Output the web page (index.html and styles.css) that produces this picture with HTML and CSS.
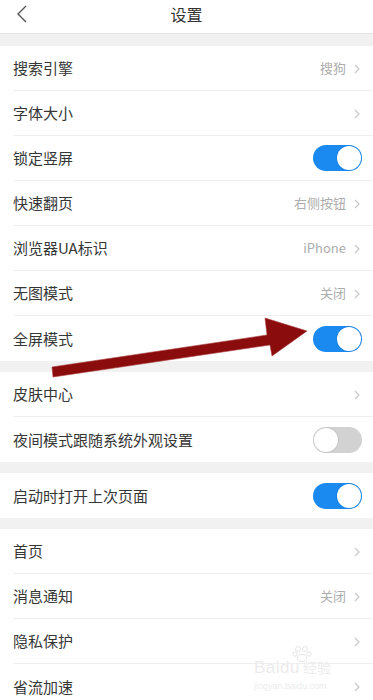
FILE: index.html
```html
<!DOCTYPE html>
<html lang="zh">
<head>
<meta charset="utf-8">
<title>设置</title>
<link rel="stylesheet" href="styles.css">
</head>
<body>
<div class="page">
  <header class="topbar">
    <svg class="back" width="14" height="18" viewBox="0 0 14 18"><polyline points="11,1 3,9 11,17" fill="none" stroke="#555" stroke-width="1.4"/></svg>
    <div class="title">设置</div>
  </header>

  <section class="group">
    <div class="row"><span class="label">搜索引擎</span><span class="right"><span class="value">搜狗</span><svg class="chev" width="6" height="10" viewBox="0 0 6 10"><polyline points="1,1 5,5 1,9" fill="none" stroke="#c8c8c8" stroke-width="1.2"/></svg></span></div>
    <div class="row"><span class="label">字体大小</span><span class="right"><svg class="chev" width="6" height="10" viewBox="0 0 6 10"><polyline points="1,1 5,5 1,9" fill="none" stroke="#c8c8c8" stroke-width="1.2"/></svg></span></div>
    <div class="row"><span class="label">锁定竖屏</span><span class="switch on"><span class="knob"></span></span></div>
    <div class="row"><span class="label">快速翻页</span><span class="right"><span class="value">右侧按钮</span><svg class="chev" width="6" height="10" viewBox="0 0 6 10"><polyline points="1,1 5,5 1,9" fill="none" stroke="#c8c8c8" stroke-width="1.2"/></svg></span></div>
    <div class="row"><span class="label">浏览器UA标识</span><span class="right"><span class="value">iPhone</span><svg class="chev" width="6" height="10" viewBox="0 0 6 10"><polyline points="1,1 5,5 1,9" fill="none" stroke="#c8c8c8" stroke-width="1.2"/></svg></span></div>
    <div class="row"><span class="label">无图模式</span><span class="right"><span class="value">关闭</span><svg class="chev" width="6" height="10" viewBox="0 0 6 10"><polyline points="1,1 5,5 1,9" fill="none" stroke="#c8c8c8" stroke-width="1.2"/></svg></span></div>
    <div class="row"><span class="label">全屏模式</span><span class="switch on"><span class="knob"></span></span></div>
  </section>

  <section class="group">
    <div class="row"><span class="label">皮肤中心</span><span class="right"><svg class="chev" width="6" height="10" viewBox="0 0 6 10"><polyline points="1,1 5,5 1,9" fill="none" stroke="#c8c8c8" stroke-width="1.2"/></svg></span></div>
    <div class="row"><span class="label">夜间模式跟随系统外观设置</span><span class="switch off"><span class="knob"></span></span></div>
  </section>

  <section class="group">
    <div class="row"><span class="label">启动时打开上次页面</span><span class="switch on"><span class="knob"></span></span></div>
  </section>

  <section class="group">
    <div class="row"><span class="label">首页</span><span class="right"><svg class="chev" width="6" height="10" viewBox="0 0 6 10"><polyline points="1,1 5,5 1,9" fill="none" stroke="#c8c8c8" stroke-width="1.2"/></svg></span></div>
    <div class="row"><span class="label">消息通知</span><span class="right"><span class="value">关闭</span><svg class="chev" width="6" height="10" viewBox="0 0 6 10"><polyline points="1,1 5,5 1,9" fill="none" stroke="#c8c8c8" stroke-width="1.2"/></svg></span></div>
    <div class="row"><span class="label">隐私保护</span><span class="right"><svg class="chev" width="6" height="10" viewBox="0 0 6 10"><polyline points="1,1 5,5 1,9" fill="none" stroke="#c8c8c8" stroke-width="1.2"/></svg></span></div>
    <div class="row"><span class="label">省流加速</span><span class="right"><svg class="chev" width="6" height="10" viewBox="0 0 6 10"><polyline points="1,1 5,5 1,9" fill="none" stroke="#c8c8c8" stroke-width="1.2"/></svg></span></div>
  </section>

  <svg class="arrow" width="373" height="700" viewBox="0 0 373 700">
    <polygon points="52,367 267,335 265,318 307,331 272,356 270,345 53,377" fill="#8a0c0c" stroke="#a83a3a" stroke-width="0.6" stroke-linejoin="round"/>
  </svg>

  <div class="watermark">
    <svg class="paw" width="20" height="18" viewBox="0 0 20 18"><g fill="none" stroke="#e6e6e6" stroke-width="1"><circle cx="6" cy="4" r="2.5"/><circle cx="13" cy="4" r="2.5"/><circle cx="3" cy="9" r="2.2"/><circle cx="17" cy="9" r="2.2"/><ellipse cx="10" cy="13" rx="4.5" ry="3.5"/></g></svg>
    <div class="wm-line"><span class="wm-baidu">Baidu</span><span class="wm-jy">经验</span></div>
    <div class="wm-url">jingyan.baidu.com</div>
  </div>
</div>
</body>
</html>
```

FILE: styles.css
```css
html, body {
  margin: 0;
  padding: 0;
}
body {
  background: #f1f1f1;
  font-family: "Noto Sans CJK SC", "Noto Sans", sans-serif;
  color: #333;
}
.page {
  position: relative;
  width: 373px;
  height: 700px;
  overflow: hidden;
}
.topbar {
  height: 33px;
  background: #fff;
  border-bottom: 1px solid #e4e4e4;
  display: flex;
  align-items: center;
  justify-content: center;
  position: relative;
  margin-bottom: 12px;
}
.back {
  position: absolute;
  left: 15px;
  top: 5px;
}
.title {
  font-size: 16px;
  color: #333;
  line-height: 20px;
  margin-top: -5px;
}
.group {
  background: #fff;
  padding-left: 13px;
  margin-bottom: 11px;
}
.row {
  box-sizing: border-box;
  height: 45px;
  display: flex;
  align-items: center;
  justify-content: space-between;
  padding-right: 13px;
  border-bottom: 1px solid #efefef;
}
.row:last-child {
  border-bottom: none;
}
.label {
  font-size: 15px;
  color: #363636;
  line-height: 20px;
}
.right {
  display: flex;
  align-items: center;
  gap: 8px;
}
.value {
  font-size: 13px;
  color: #adadad;
  line-height: 18px;
}
.chev {
  display: block;
  margin-top: 1px;
}
.switch {
  width: 49px;
  height: 26px;
  border-radius: 13px;
  display: flex;
  align-items: center;
  box-sizing: border-box;
  padding: 0 1px;
  margin-right: -2px;
}
.switch.on {
  background: #1a8af0;
  justify-content: flex-end;
}
.switch.off {
  background: #d2d2d2;
  justify-content: flex-start;
}
.knob {
  width: 24px;
  height: 24px;
  border-radius: 50%;
  background: #fff;
  box-shadow: 0 0 0 1px rgba(0,0,0,0.06);
}
.arrow {
  position: absolute;
  left: 0;
  top: 0;
  pointer-events: none;
}
.watermark {
  position: absolute;
  left: 254px;
  top: 645px;
  width: 100px;
  display: flex;
  flex-direction: column;
  align-items: flex-start;
}
.paw {
  margin-left: 38px;
  margin-bottom: -4px;
}
.wm-line {
  display: flex;
  align-items: baseline;
  gap: 3px;
  line-height: 16px;
}
.wm-baidu {
  font-family: "Liberation Sans", sans-serif;
  font-size: 17px;
  color: #ececec;
  letter-spacing: 0.5px;
}
.wm-jy {
  font-size: 14px;
  color: #ececec;
}
.wm-url {
  font-family: "Liberation Sans", sans-serif;
  font-size: 9px;
  color: #ececec;
  line-height: 14px;
  margin-top: 3px;
}
```
